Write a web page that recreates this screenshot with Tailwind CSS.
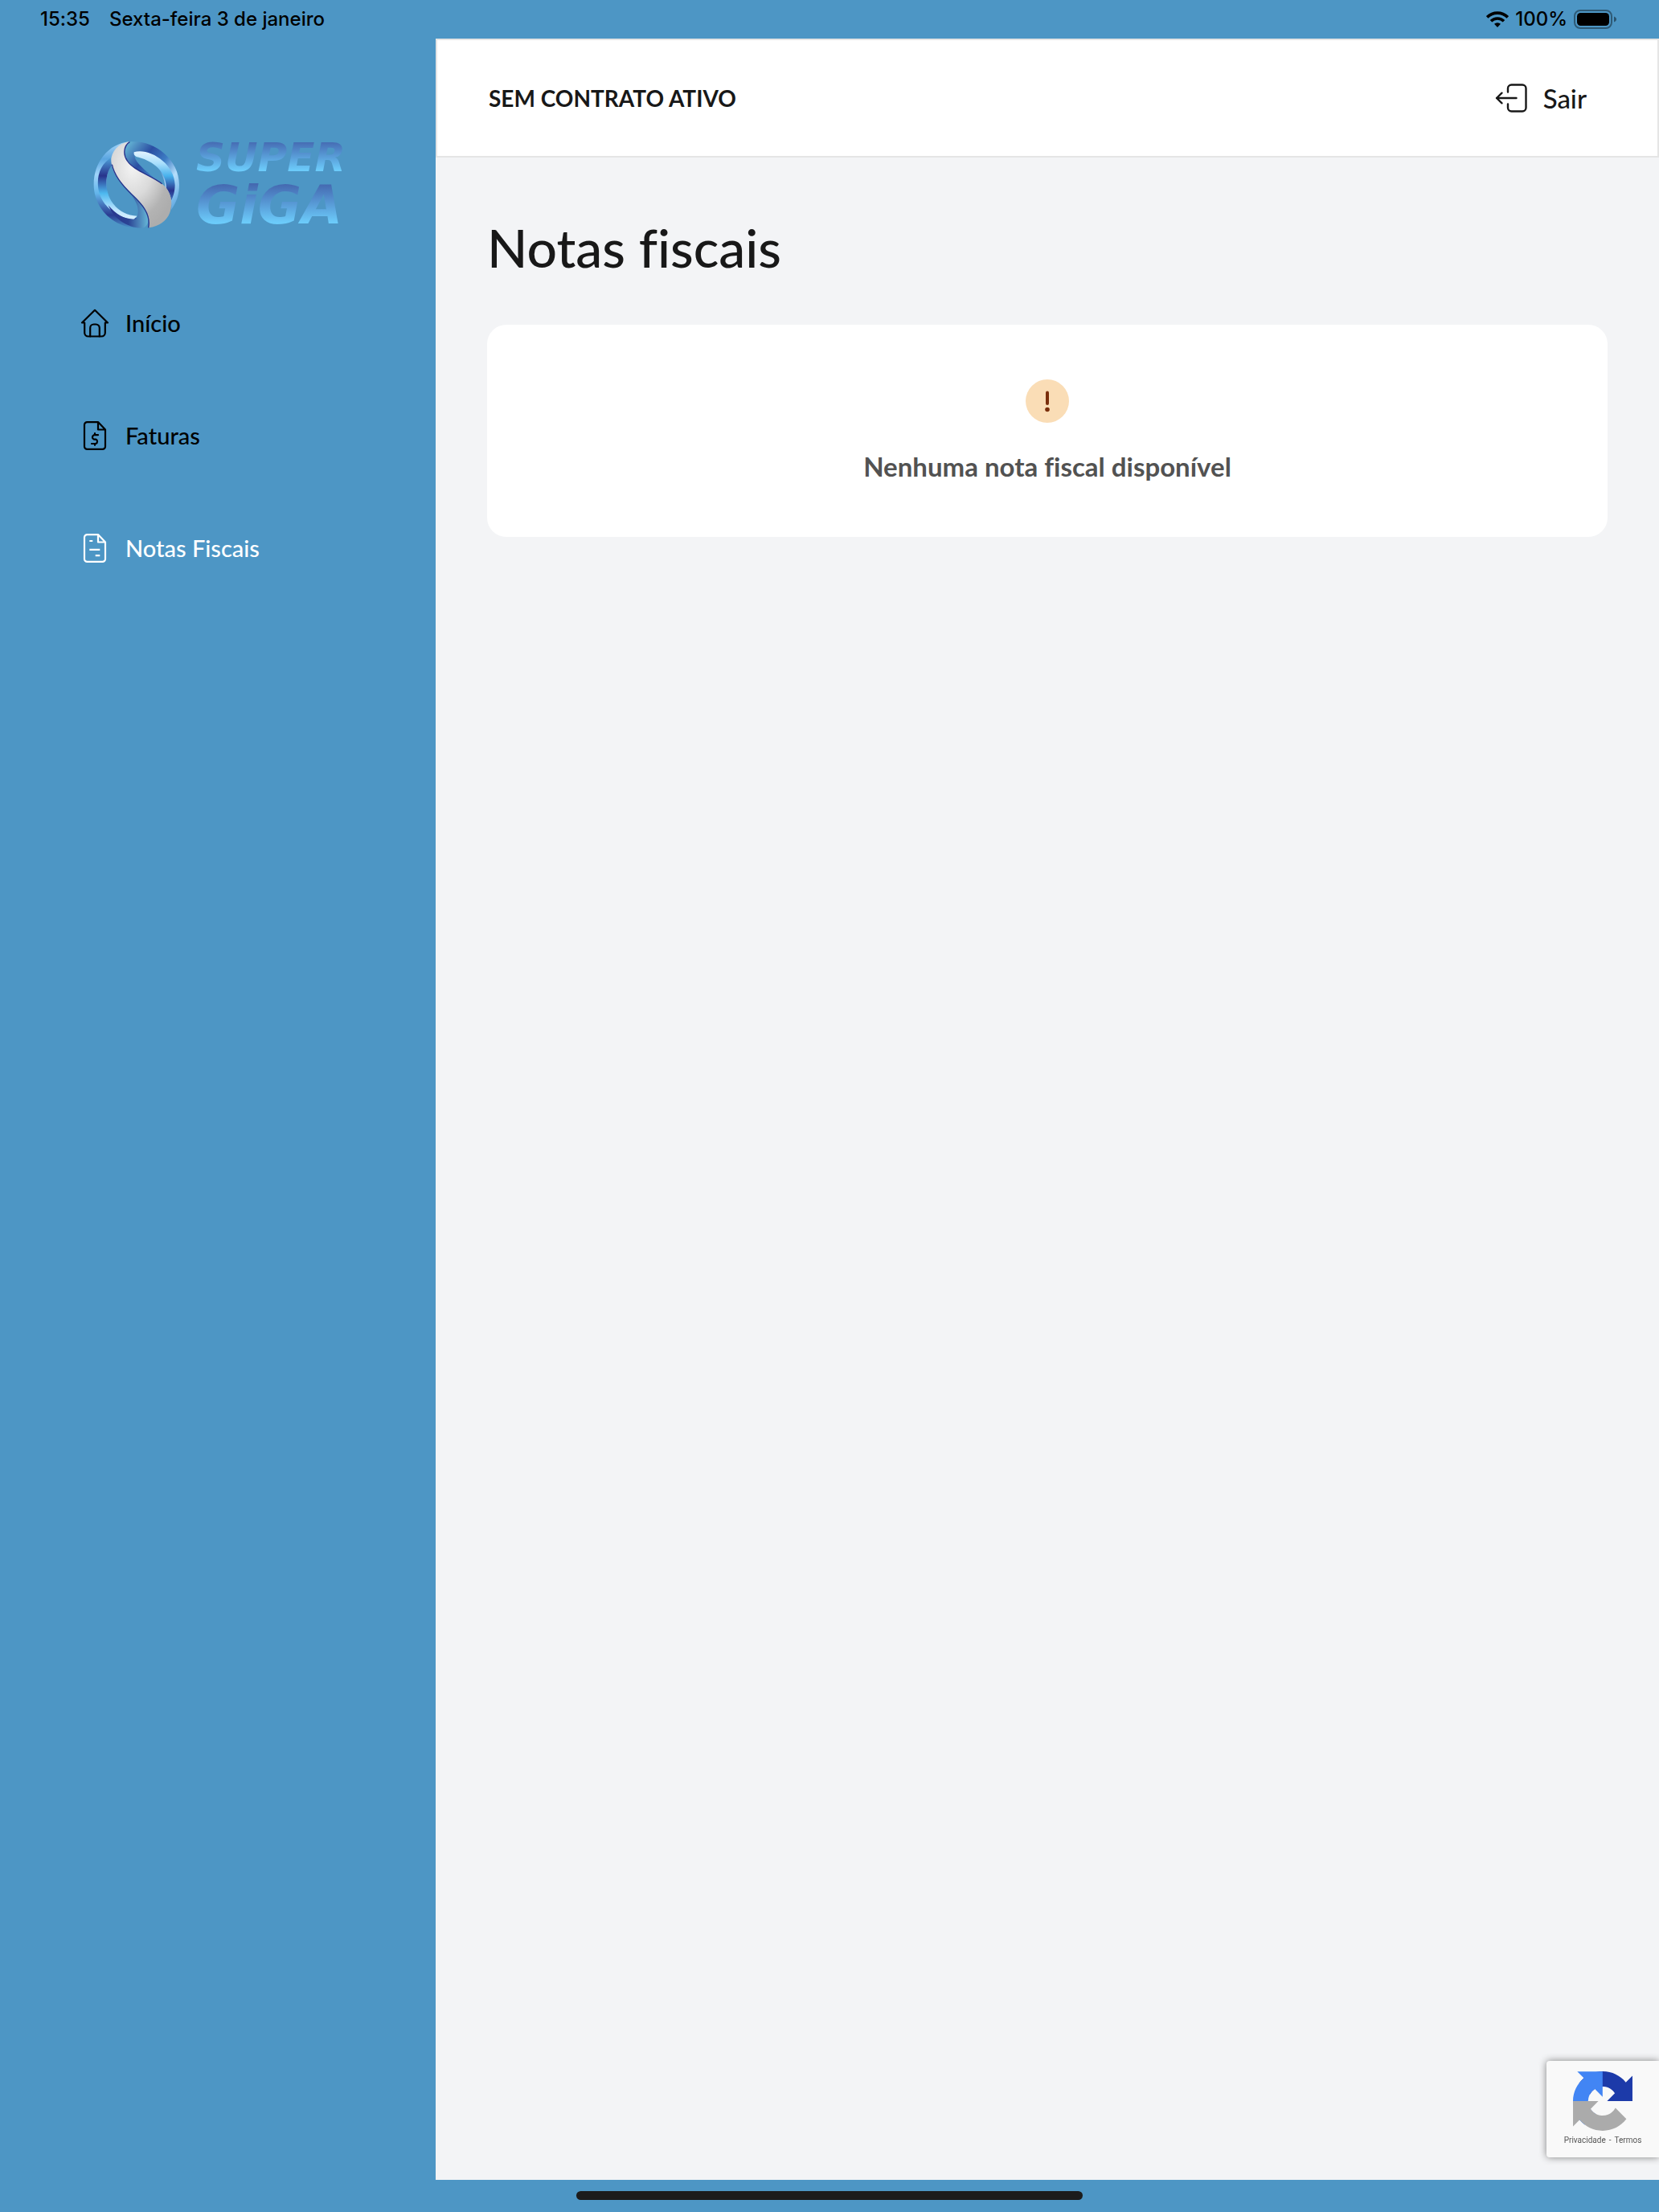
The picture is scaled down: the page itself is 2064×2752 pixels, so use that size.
<!DOCTYPE html>
<html lang="pt-BR">
<head>
    <meta charset="UTF-8">
    <meta name="viewport" content="width=device-width, initial-scale=1.0">
    <title>Notas fiscais</title>
    <script src="https://cdn.jsdelivr.net/npm/@tailwindcss/browser@4"></script>
</head>
<body class="min-h-screen flex flex-col bg-[#4d96c5] text-[#181818] font-['Lato',sans-serif] [font-variant-ligatures:none]">
    <!-- Status bar -->
    <div class="h-12 shrink-0 flex items-center justify-between pl-[50px] pr-[52px] text-black text-[24px] leading-6 font-medium font-['Inter',sans-serif]">
        <div class="flex gap-6">
            <span>15:35</span>
            <span>Sexta-feira 3 de janeiro</span>
        </div>
        <div class="flex items-center gap-2">
            <svg class="w-7 h-5" viewBox="0 0 28 20" fill="none" stroke="#000" stroke-width="3.6">
                <path d="M1.2 7.4a18.2 18.2 0 0 1 25.6 0"/>
                <path d="M6 12.3a11.4 11.4 0 0 1 16 0"/>
                <path d="M14 20l-4-4.2a5.8 5.8 0 0 1 8 0z" fill="#000" stroke="none"/>
            </svg>
            <span>100%</span>
            <svg class="w-[54px] h-6" viewBox="0 0 54 24">
                <rect x="1" y="1" width="46" height="22" rx="7" fill="none" stroke="#000" stroke-opacity=".4" stroke-width="2"/>
                <rect x="4" y="4" width="40" height="16" rx="4.5"/>
                <path d="M50 8.500c4 1.500 4 5.500 0 7z" fill-opacity=".45"/>
            </svg>
        </div>
    </div>

    <div class="flex grow">
        <!-- Sidebar -->
        <aside class="w-[542px] shrink-0">
            <a href="#" class="flex items-center gap-5 pl-[116px] pt-[122px]">
                <svg class="w-[108px] h-[108px]" viewBox="0 0 324 324">
                    <defs>
                        <linearGradient id="ringLeft" x1="0" y1="0" x2="0" y2="1">
                            <stop offset="0" stop-color="#a9d8fb"/>
                            <stop offset=".2" stop-color="#5aa5e0"/>
                            <stop offset=".38" stop-color="#9fd4fa"/>
                            <stop offset=".6" stop-color="#63b5ea"/>
                            <stop offset=".85" stop-color="#2a3c92"/>
                            <stop offset="1" stop-color="#4a92c8"/>
                        </linearGradient>
                        <linearGradient id="bandLeft" x1="0" y1="0" x2="0" y2="1">
                            <stop offset="0" stop-color="#4fa5dd"/>
                            <stop offset=".3" stop-color="#28338c"/>
                            <stop offset=".58" stop-color="#4db8ef"/>
                            <stop offset=".85" stop-color="#bfe6ff"/>
                            <stop offset="1" stop-color="#d9f0ff"/>
                        </linearGradient>
                        <linearGradient id="ringRight" x1="0" y1="0" x2="1" y2="1">
                            <stop offset="0" stop-color="#6cc3dc"/>
                            <stop offset=".3" stop-color="#2b4ea2"/>
                            <stop offset=".5" stop-color="#3d7cc4"/>
                            <stop offset=".7" stop-color="#b5dffc"/>
                            <stop offset="1" stop-color="#4b9bdb"/>
                        </linearGradient>
                        <linearGradient id="bandRight" x1="0" y1="0" x2="0" y2="1">
                            <stop offset="0" stop-color="#e4f4ff"/>
                            <stop offset=".25" stop-color="#a8defc"/>
                            <stop offset=".5" stop-color="#49b2ec"/>
                            <stop offset=".8" stop-color="#28338c"/>
                            <stop offset="1" stop-color="#3c6fb8"/>
                        </linearGradient>
                        <linearGradient id="tail" x1="0" y1="0" x2="1" y2="0">
                            <stop offset="0" stop-color="#28338c"/>
                            <stop offset=".5" stop-color="#2b4494"/>
                            <stop offset="1" stop-color="#66b8d8"/>
                        </linearGradient>
                        <radialGradient id="silver" cx=".35" cy=".3" r=".75">
                            <stop offset="0" stop-color="#f3f3f3"/>
                            <stop offset=".45" stop-color="#dadada"/>
                            <stop offset=".8" stop-color="#b3b3b3"/>
                            <stop offset="1" stop-color="#adadad"/>
                        </radialGradient>
                    </defs>
                    <!-- left ring -->
                    <path d="M135 1C55 8 1 80 2 162c1 90 75 160 165 161l-5-37C95 285 48 225 49 155c1-35 10-62 28-85z" fill="url(#ringLeft)"/>
                    <path d="M70 58C30 82 14 122 18 168c6 66 64 116 132 124l14-14C100 276 50 225 49 155c0-30 9-54 24-72z" fill="url(#bandLeft)"/>
                    <path d="M56 238c30 36 62 54 104 52 16-34 3-62-16-88 26 26 58 60 62 84 0 20-8 36-24 37-50 2-106-34-126-85z" fill="url(#tail)"/>
                    <!-- right ring -->
                    <path d="M140 1c84-8 180 62 181 160 0 36-10 66-30 94 4-40-8-66-22-84C262 100 214 62 156 49c-6 20 20 46 90 102-60-30-110-56-124-86-10-26-2-52 18-64z" fill="url(#ringRight)"/>
                    <path d="M152 40c54-18 152 40 153 122 0 22-6 44-14 58-2-20-10-34-18-46C272 110 222 74 172 60c-14-2-22-8-20-20z" fill="url(#bandRight)"/>
                    <!-- S ribbon -->
                    <path d="M136 1C108 4 76 22 67 62c-4 52 40 96 76 132 36 34 74 72 64 128 40-4 68-28 78-54 16-46 2-84-26-108-40-32-108-50-132-88-16-26-12-56 9-71z" fill="url(#silver)"/>
                    <path d="M70 86c10 48 46 86 76 114 34 32 70 70 60 122M136 2c-22 14-26 46-9 70 22 36 90 54 130 86" fill="none" stroke="#28338c" stroke-width="4"/>
                </svg>
                <span class="flex flex-col font-['DejaVu_Sans',sans-serif] font-bold italic text-transparent">
                    <span class="text-[50px] leading-[52px] bg-clip-text bg-linear-to-b from-[#4468b0] from-10% to-[#6ccbfa] to-80%">SUPER</span>
                    <span class="text-[66px] leading-[68px] bg-clip-text bg-linear-to-b from-[#4468b0] from-10% to-[#6ccbfa] to-80%">GiGA</span>
                </span>
            </a>

            <nav class="flex flex-col gap-[104px] pl-[100px] pt-[94px] text-[29px] leading-9 text-black font-medium">
                <a href="#" class="flex items-center gap-5">
                    <svg class="w-9 h-9" viewBox="0 0 36 36" fill="none" stroke="currentColor" stroke-width="2.2" stroke-linecap="round" stroke-linejoin="round">
                        <path d="M5.200 17.500H2L18 1.800l16 15.700h-3.200V30a4.500 4.500 0 0 1-4.500 4.500H9.700A4.500 4.500 0 0 1 5.200 30z"/>
                        <path d="M12.200 34.500V24a4.500 4.500 0 0 1 4.500-4.500h2.600a4.500 4.500 0 0 1 4.500 4.500v10.500"/>
                    </svg>
                    Início
                </a>
                <a href="#" class="flex items-center gap-5">
                    <svg class="w-9 h-9" viewBox="0 0 36 36" fill="none" stroke="currentColor" stroke-width="2.2" stroke-linecap="round" stroke-linejoin="round">
                        <path d="M22 1.100H8.500A3.500 3.500 0 0 0 5 4.600v26.800a3.500 3.500 0 0 0 3.500 3.500h19a3.500 3.500 0 0 0 3.500-3.500V10.500L22 1.100v9.400h9"/>
                        <path d="M22 17.200h-5.200a2.900 2.900 0 0 0 0 5.400h2.400a2.900 2.900 0 0 1 0 5.400H14M18 15.200v1.800M18 28v1.800"/>
                    </svg>
                    Faturas
                </a>
                <a href="#" class="flex items-center gap-5 text-white">
                    <svg class="w-9 h-9" viewBox="0 0 36 36" fill="none" stroke="currentColor" stroke-width="2.2" stroke-linejoin="round">
                        <path d="M22 1.100H8.500A3.500 3.500 0 0 0 5 4.600v26.800a3.500 3.500 0 0 0 3.500 3.500h19a3.500 3.500 0 0 0 3.500-3.500V10.500L22 1.100v9.400h9"/>
                        <path d="M11.300 9h4M11.300 19.800h13M18.700 27.200h5.600"/>
                    </svg>
                    Notas Fiscais
                </a>
            </nav>
        </aside>

        <div class="grow bg-[#f3f4f6]">
            <!-- Header -->
            <header class="h-[148px] flex items-center justify-between pl-16 pr-[88px] bg-white border-2 border-[#e5e5e5]">
                <span class="text-[28px] leading-9 font-bold">SEM CONTRATO ATIVO</span>
                <button type="button" class="flex items-center gap-5 text-[33px] leading-10 font-medium">
                    <svg class="w-10 h-[38px]" viewBox="0 0 40 38" fill="none" stroke="currentColor" stroke-width="2.4" stroke-linecap="round" stroke-linejoin="round">
                        <path d="M16 11.500V7a4.500 4.500 0 0 1 4.500-4.500H34A4.500 4.500 0 0 1 38.500 7v24a4.500 4.500 0 0 1-4.500 4.500H20.500A4.500 4.500 0 0 1 16 31v-4.500"/>
                        <path d="M26.500 19H2M8.500 12.700L2 19l6.500 6.300"/>
                    </svg>
                    Sair
                </button>
            </header>

            <!-- Content -->
            <main class="px-16 pt-[72px]">
                <h1 class="text-[66px] leading-[80px] font-medium">Notas fiscais</h1>
                <div class="mt-14 h-[264px] flex flex-col items-center pt-[68px] gap-8 rounded-3xl bg-white">
                    <svg class="w-[54px] h-[54px]" viewBox="0 0 54 54">
                        <circle cx="27" cy="27" r="27" fill="#faddb6"/>
                        <path d="M27 16.500V30" stroke="#7a2e0b" stroke-width="4" stroke-linecap="round"/>
                        <circle cx="27" cy="37.500" r="2.800" fill="#7a2e0b"/>
                    </svg>
                    <p class="text-[33px] leading-[44px] font-bold text-[#525252]">Nenhuma nota fiscal disponível</p>
                </div>
            </main>
        </div>
    </div>

    <!-- Home indicator -->
    <div class="h-10 shrink-0 flex justify-center pt-[14px]">
        <div class="w-[630px] h-[11px] rounded-full bg-[#1c1c1c]"></div>
    </div>

    <!-- reCAPTCHA badge -->
    <div class="fixed right-0 bottom-[68px] w-[140px] h-[120px] flex flex-col items-center pt-3 rounded-l bg-[#f9f9f9] shadow-[0_0_10px_#808080]">
        <svg class="w-[74px] h-[76px]" viewBox="0 0 64 64">
            <path d="M64 31.955l-.033-1.370V4.687l-7.160 7.160C50.948 4.674 42.033.093 32.050.093c-10.400 0-19.622 4.960-25.458 12.640l11.736 11.860a15.550 15.550 0 0 1 4.754-5.334c2.050-1.600 4.952-2.906 8.968-2.906.485 0 .860.057 1.135.163 4.976.393 9.288 3.140 11.828 7.124l-8.307 8.307L64 31.953" fill="#1c3aa9"/>
            <path d="M31.862.094l-1.370.033H4.594l7.160 7.160C4.580 13.147 0 22.060 0 32.046c0 10.400 4.960 19.622 12.640 25.458L24.500 45.768a15.550 15.550 0 0 1-5.334-4.754c-1.600-2.050-2.906-4.952-2.906-8.968 0-.485.057-.860.163-1.135.393-4.976 3.140-9.288 7.124-11.828l8.307 8.307L31.860.095" fill="#4285f4"/>
            <path d="M.001 32.045l.033 1.370v25.898l7.160-7.160c5.860 7.173 14.774 11.754 24.760 11.754 10.400 0 19.622-4.960 25.458-12.640l-11.736-11.860a15.550 15.550 0 0 1-4.754 5.334c-2.050 1.600-4.952 2.906-8.968 2.906-.485 0-.860-.057-1.135-.163-4.976-.393-9.288-3.140-11.828-7.124l8.307-8.307c-10.522.040-22.400.066-27.295-.005" fill="#ababab"/>
        </svg>
        <div class="flex gap-1 text-[10px] leading-[22px] text-[#555] font-['Roboto',sans-serif]">
            <a href="#">Privacidade</a>
            <span>-</span>
            <a href="#">Termos</a>
        </div>
    </div>
</body>
</html>
